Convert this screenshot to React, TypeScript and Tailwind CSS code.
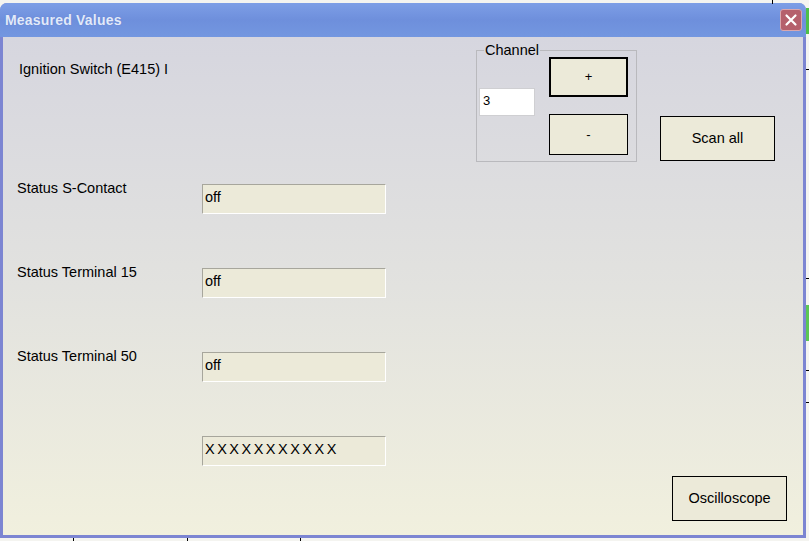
const rows = [
  { label: "Status S-Contact", value: "off" },
  { label: "Status Terminal 15", value: "off" },
  { label: "Status Terminal 50", value: "off" },
];

const font = "font-['Liberation_Sans',Arial,sans-serif]";

function Field({ value, wide }: { value: string; wide?: boolean }) {
  return (
    <div
      className={`mt-[4px] h-[30px] w-[184px] border border-t-[#a7a69c] border-l-[#a7a69c] border-b-white border-r-white bg-[#ecead9] pl-[2px] pt-[4px] text-[14.5px] leading-[17px] text-black ${
        wide ? "tracking-[2.5px]" : ""
      }`}
    >
      {value}
    </div>
  );
}

function CloseButton() {
  return (
    <div className="flex h-[22px] w-[22px] items-center justify-center rounded-[3px] border border-[#d9a7ae] bg-[#b5606c]">
      <svg width="14" height="14" viewBox="0 0 14 14">
        <path d="M2.5 2.5 L11.5 11.5 M11.5 2.5 L2.5 11.5" stroke="white" strokeWidth="2.2" strokeLinecap="round" />
      </svg>
    </div>
  );
}

export default function App() {
  return (
    <div className={`relative h-[541px] w-[809px] overflow-hidden bg-[#f4f4f0] ${font}`}>
      {/* background behind the dialog */}
      <div className="absolute left-[772px] top-0 h-[4px] w-[1px] bg-black" />
      <div className="absolute right-0 top-[8px] h-[26px] w-[3px] bg-[#4fbf4a]" />
      <div className="absolute right-0 top-[305px] h-[36px] w-[3px] bg-[#5cc655]" />
      <div className="absolute right-0 top-[69px] h-[1px] w-[3px] bg-black" />
      <div className="absolute right-0 top-[278px] h-[1px] w-[3px] bg-black" />
      <div className="absolute right-0 top-[370px] h-[1px] w-[3px] bg-black" />
      <div className="absolute right-0 top-[402px] h-[1px] w-[3px] bg-black" />
      <div className="absolute bottom-0 left-[73px] h-[3px] w-[1px] bg-black" />
      <div className="absolute bottom-0 left-[187px] h-[3px] w-[1px] bg-black" />
      <div className="absolute bottom-0 left-[300px] h-[3px] w-[1px] bg-black" />

      <div className="mt-[3px] flex h-[535px] w-[806px] flex-col overflow-hidden rounded-t-[7px] bg-[#7c85d2]">
        <div className="flex h-[34px] shrink-0 items-center justify-between bg-gradient-to-b from-[#7d9ee6] via-[#6e8fdc] to-[#7397e0] pl-[5px] pr-[4px]">
          <span className="text-[14px] font-bold tracking-[0.2px] text-[#e2eafa] [text-shadow:0_0_1px_#5a78c8]">Measured Values</span>
          <CloseButton />
        </div>

        <div className="mx-[3px] mb-[3px] flex flex-1 flex-col bg-gradient-to-b from-[#d6d6df] via-[#e2e2df] to-[#f1f0de]">
          {/* top section */}
          <div className="flex h-[143px] items-start">
            <div className="mt-[24px] w-[473px] shrink-0 pl-[16px] text-[14.5px] leading-[17px] text-black">
              Ignition Switch (E415) I
            </div>

            <fieldset className="mt-[6px] w-[161px] shrink-0 border border-[#b9b9bd] pb-[6px] pl-[2px]">
              <legend className="ml-[5px] px-[1px] text-[14.5px] leading-[14px] text-black">Channel</legend>
              <div className="flex items-start">
                <div className="mt-[31px] h-[28px] w-[56px] border border-[#cfcfd2] bg-white pl-[3px] pt-[4px] text-[13px] leading-[16px] text-black">
                  3
                </div>
                <div className="ml-[14px] flex flex-col gap-[17px]">
                  <button className="flex h-[40px] w-[79px] items-center justify-center border-2 border-black bg-[#ecead9] text-[13px] text-black">
                    +
                  </button>
                  <button className="flex h-[41px] w-[79px] items-center justify-center border border-black bg-[#ecead9] text-[13px] text-black">
                    -
                  </button>
                </div>
              </div>
            </fieldset>

            <button className="ml-[23px] mt-[79px] flex h-[45px] w-[115px] shrink-0 items-center justify-center border border-black bg-[#ecead9] text-[14.5px] text-black">
              Scan all
            </button>
          </div>

          {/* value rows */}
          {rows.map((row) => (
            <div key={row.label} className="flex h-[84px] items-start">
              <div className="w-[199px] shrink-0 pl-[14px] text-[14.5px] leading-[17px] text-black">{row.label}</div>
              <Field value={row.value} />
            </div>
          ))}
          <div className="flex items-start">
            <div className="w-[199px] shrink-0" />
            <Field value="XXXXXXXXXXX" wide />
          </div>

          <button className="mr-[16px] mt-[10px] flex h-[45px] w-[115px] items-center justify-center self-end border border-black bg-[#ecead9] text-[14.5px] text-black">
            Oscilloscope
          </button>
        </div>
      </div>
    </div>
  );
}
